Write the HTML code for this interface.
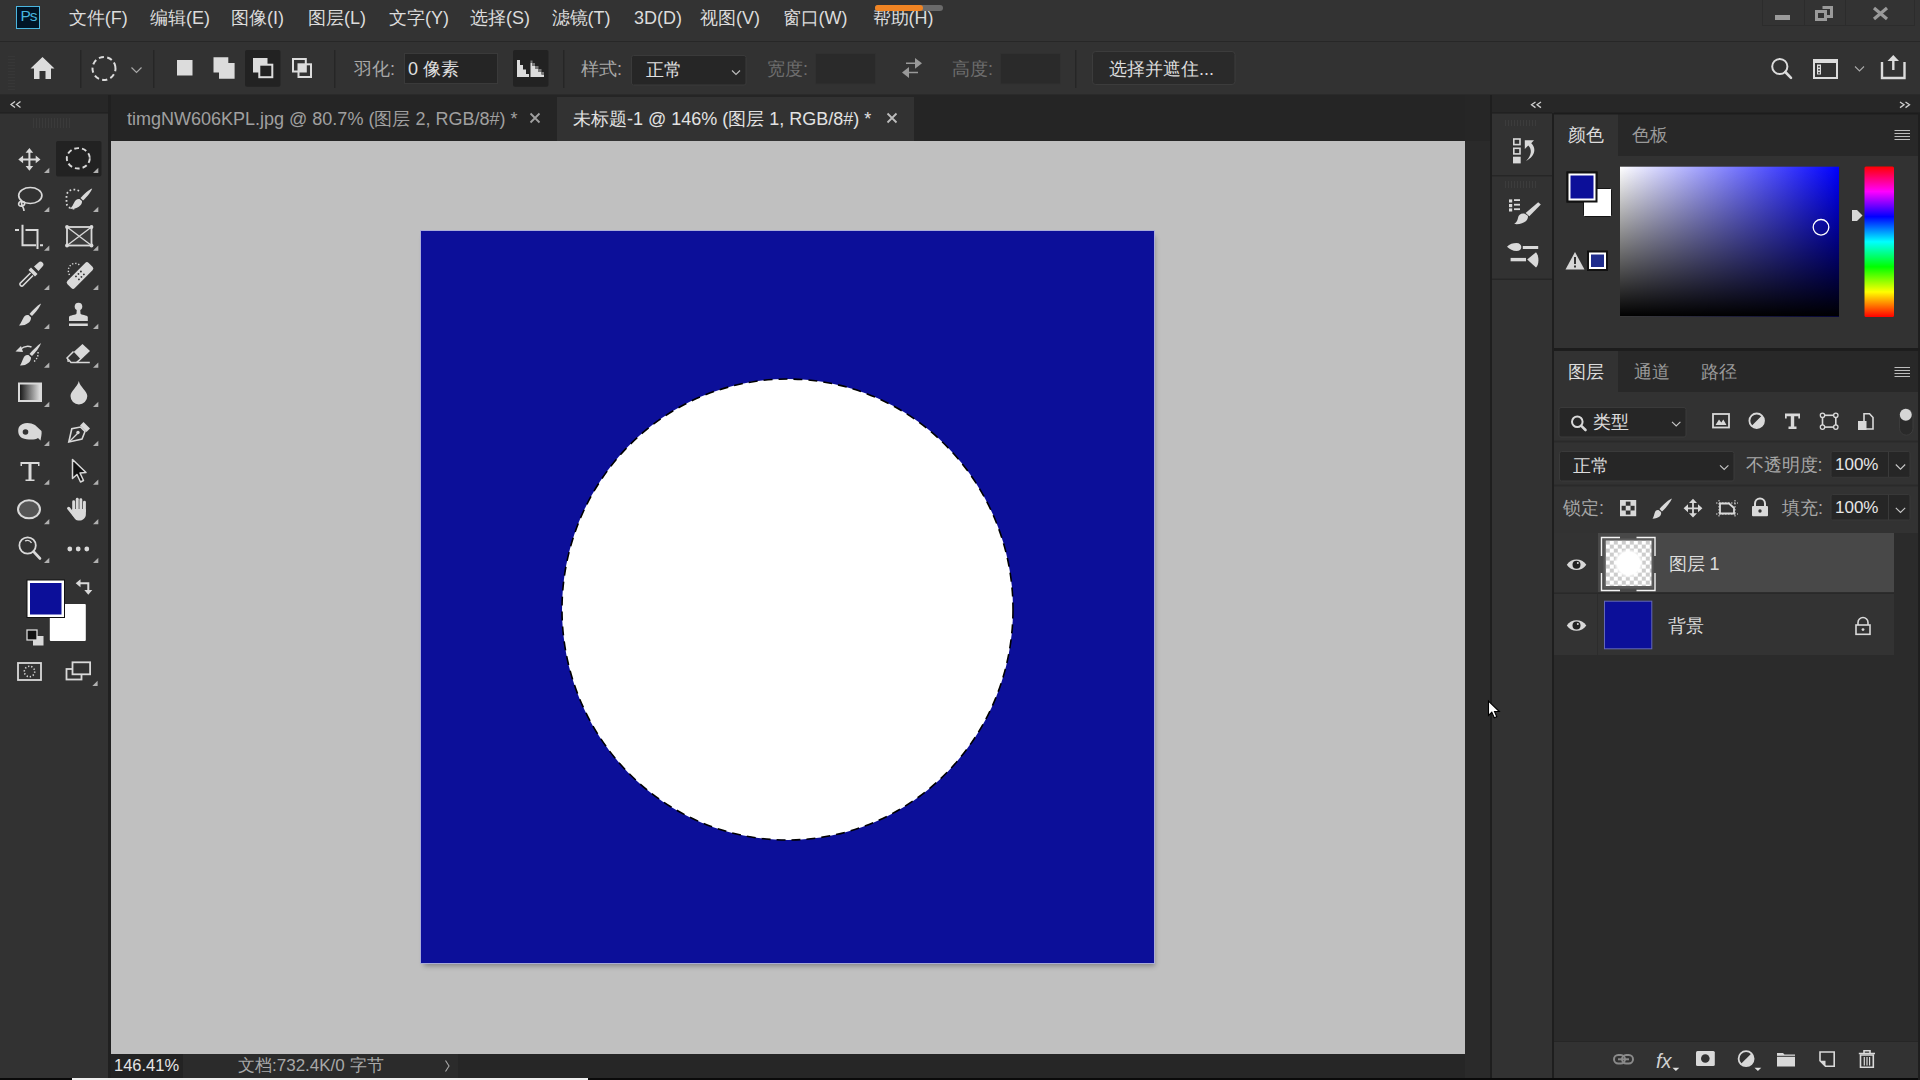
<!DOCTYPE html>
<html><head><meta charset="utf-8">
<style>
*{margin:0;padding:0;box-sizing:border-box}
html,body{width:1920px;height:1080px;overflow:hidden;background:#323232;font-family:"Liberation Sans",sans-serif;color:#d6d6d6}
.a{position:absolute}
.t{position:absolute;white-space:nowrap;line-height:1}
svg{position:absolute;overflow:visible}
</style></head><body>
<!-- menu bar -->
<div class="a" style="left:0;top:0;width:1920px;height:41px;background:#333333"></div>
<div class="a" style="left:0;top:41px;width:1920px;height:1px;background:#272727"></div>
<!-- options bar -->
<div class="a" style="left:0;top:42px;width:1920px;height:53px;background:#323232"></div>
<div class="a" style="left:0;top:94px;width:1920px;height:1px;background:#2a2a2a"></div>
<!-- left tools panel -->
<div class="a" style="left:0;top:95px;width:108px;height:985px;background:#323232"></div>
<div class="a" style="left:0;top:95px;width:108px;height:18px;background:#272727"></div>
<div class="a" style="left:108px;top:95px;width:3px;height:985px;background:#202020"></div>
<!-- tab bar -->
<div class="a" style="left:111px;top:95px;width:1354px;height:46px;background:#252525"></div>
<div class="a" style="left:557px;top:97px;width:357px;height:44px;background:#323232"></div>
<!-- canvas area -->
<div class="a" style="left:111px;top:141px;width:1354px;height:913px;background:#c0c0c0"></div>
<!-- status bar -->
<div class="a" style="left:111px;top:1054px;width:1354px;height:24px;background:#262626"></div>
<div class="a" style="left:183px;top:1054px;width:275px;height:24px;background:#2b2b2b"></div>
<div class="a" style="left:1465px;top:1054px;width:25px;height:24px;background:#2f2f2f"></div>
<div class="a" style="left:111px;top:1054px;width:72px;height:24px;background:#232323"></div>
<!-- right dark column -->
<div class="a" style="left:1465px;top:95px;width:25px;height:985px;background:#2a2a2a"></div>
<div class="a" style="left:1465px;top:95px;width:25px;height:46px;background:#262626"></div>
<div class="a" style="left:1490px;top:95px;width:2px;height:985px;background:#1e1e1e"></div>
<!-- icon column -->
<div class="a" style="left:1492px;top:95px;width:60px;height:985px;background:#323232"></div>
<div class="a" style="left:1492px;top:95px;width:60px;height:18px;background:#272727"></div>
<div class="a" style="left:1552px;top:113px;width:2px;height:967px;background:#1e1e1e"></div>
<div class="a" style="left:1552px;top:95px;width:2px;height:18px;background:#272727"></div>
<!-- right panels -->
<div class="a" style="left:1554px;top:95px;width:366px;height:18px;background:#272727"></div>
<!-- color panel -->
<div class="a" style="left:1554px;top:113px;width:366px;height:43px;background:#282828"></div>
<div class="a" style="left:1554px;top:113px;width:64px;height:43px;background:#323232"></div>
<div class="a" style="left:1554px;top:156px;width:366px;height:192px;background:#323232"></div>
<div class="a" style="left:1554px;top:348px;width:366px;height:3px;background:#1e1e1e"></div>
<!-- layers panel -->
<div class="a" style="left:1554px;top:351px;width:366px;height:41px;background:#282828"></div>
<div class="a" style="left:1554px;top:351px;width:64px;height:41px;background:#323232"></div>
<div class="a" style="left:1554px;top:392px;width:364px;height:141px;background:#323232"></div>
<div class="a" style="left:1554px;top:533px;width:366px;height:508px;background:#2b2b2b"></div>
<div class="a" style="left:1554px;top:533px;width:340px;height:122px;background:#333333"></div>
<div class="a" style="left:1598px;top:533px;width:296px;height:59px;background:#484848"></div>
<div class="a" style="left:1554px;top:1041px;width:366px;height:37px;background:#323232"></div>
<!-- bottom strip -->
<div class="a" style="left:0;top:1078px;width:1920px;height:2px;background:#0a0a0a"></div>
<div class="a" style="left:72px;top:1078px;width:516px;height:2px;background:#f0f0f0"></div>

<!-- MENU -->
<div class="a" style="left:16px;top:6px;width:24px;height:23px;background:#001426;border:1.4px solid #4ab6e0"></div>
<div class="t" style="left:20.5px;top:7.5px;font-size:15.5px;letter-spacing:-1.2px;color:#47b4de">Ps</div>
<div class="t" style="left:68.75px;top:9px;font-size:18px;color:#dcdcdc">文件(F)</div>
<div class="t" style="left:150px;top:9px;font-size:18px;color:#dcdcdc">编辑(E)</div>
<div class="t" style="left:231px;top:9px;font-size:18px;color:#dcdcdc">图像(I)</div>
<div class="t" style="left:308px;top:9px;font-size:18px;color:#dcdcdc">图层(L)</div>
<div class="t" style="left:389px;top:9px;font-size:18px;color:#dcdcdc">文字(Y)</div>
<div class="t" style="left:470px;top:9px;font-size:18px;color:#dcdcdc">选择(S)</div>
<div class="t" style="left:551.5px;top:9px;font-size:18px;color:#dcdcdc">滤镜(T)</div>
<div class="t" style="left:634px;top:9px;font-size:18px;color:#dcdcdc">3D(D)</div>
<div class="t" style="left:700px;top:9px;font-size:18px;color:#dcdcdc">视图(V)</div>
<div class="t" style="left:782.5px;top:9px;font-size:18px;color:#dcdcdc">窗口(W)</div>
<div class="t" style="left:872.5px;top:9px;font-size:18px;color:#dcdcdc">帮助(H)</div>
<div class="a" style="left:875px;top:5px;width:68px;height:6px;border-radius:3px;background:#6a6a6a"></div>
<div class="a" style="left:875px;top:5px;width:48px;height:6px;border-radius:3px;background:#f08423"></div>
<div class="a" style="left:1762px;top:0;width:153px;height:26px;border:1px solid #2c2c2c;border-top:none"></div>
<div class="a" style="left:1804px;top:0;width:1px;height:26px;background:#2c2c2c"></div>
<div class="a" style="left:1845px;top:0;width:1px;height:26px;background:#2c2c2c"></div>
<div class="a" style="left:1775px;top:15px;width:15px;height:5px;background:#9a9a9a"></div>
<svg style="left:0;top:0" width="1" height="1"><path d="M1822.5 7.5h9v9h-5M1816.5 11.5h9v8h-9z" fill="none" stroke="#9a9a9a" stroke-width="3"/><path d="M1874 8l13 11M1887 8l-13 11" stroke="#9a9a9a" stroke-width="3.2"/></svg>
<!-- OPTIONS -->
<svg style="left:0;top:0" width="1" height="1">
<rect opacity="0.55" x="8" y="56" width="7" height="1" fill="#3c3c3c"/>
<rect opacity="0.55" x="8" y="59" width="7" height="1" fill="#3c3c3c"/>
<rect opacity="0.55" x="8" y="62" width="7" height="1" fill="#3c3c3c"/>
<rect opacity="0.55" x="8" y="65" width="7" height="1" fill="#3c3c3c"/>
<rect opacity="0.55" x="8" y="68" width="7" height="1" fill="#3c3c3c"/>
<rect opacity="0.55" x="8" y="71" width="7" height="1" fill="#3c3c3c"/>
<rect opacity="0.55" x="8" y="74" width="7" height="1" fill="#3c3c3c"/>
<rect opacity="0.55" x="8" y="77" width="7" height="1" fill="#3c3c3c"/>
<rect opacity="0.55" x="8" y="80" width="7" height="1" fill="#3c3c3c"/>
<rect opacity="0.55" x="8" y="83" width="7" height="1" fill="#3c3c3c"/>
<rect opacity="0.55" x="8" y="86" width="7" height="1" fill="#3c3c3c"/>
<rect opacity="0.55" x="8" y="89" width="7" height="1" fill="#3c3c3c"/>
<rect x="80" y="50" width="1.5" height="38" fill="#262626"/>
<rect x="153" y="50" width="1.5" height="38" fill="#262626"/>
<rect x="334" y="50" width="1.5" height="38" fill="#262626"/>
<rect x="563" y="50" width="1.5" height="38" fill="#262626"/>
<rect x="1075" y="50" width="1.5" height="38" fill="#262626"/>
<path d="M42.5 57 L54.5 68.5 L51 68.5 L51 79 L45.5 79 L45.5 71 L39.5 71 L39.5 79 L34 79 L34 68.5 L30.5 68.5 Z" fill="#dcdcdc"/>
<circle cx="104" cy="68.5" r="11.5" fill="none" stroke="#dcdcdc" stroke-width="2" stroke-dasharray="5.2 3.3" transform="rotate(-12 104 68.5)"/>
<path d="M131.5 67.5 L136.5 72.5 L141.5 67.5" fill="none" stroke="#a8a8a8" stroke-width="1.2"/>
<rect x="177" y="60" width="15.5" height="15.5" fill="#dcdcdc"/>
<path d="M213.5 57.3 H228.3 V63 H234.6 V78.7 H219 V72.5 H213.5 Z" fill="#dcdcdc"/>
<rect x="245" y="50" width="35.5" height="36.7" rx="2" fill="#222222"/>
<rect x="253" y="58" width="14.5" height="14.5" fill="#dcdcdc"/>
<rect x="259.3" y="64.7" width="13" height="12.5" fill="#222" stroke="#dcdcdc" stroke-width="2"/>
<rect x="293" y="59" width="12.8" height="12.5" fill="none" stroke="#dcdcdc" stroke-width="2"/>
<rect x="298.5" y="64.3" width="12.5" height="12.7" fill="none" stroke="#dcdcdc" stroke-width="2"/>
<rect x="298.5" y="64.3" width="7.3" height="7.2" fill="#dcdcdc"/>
<rect x="404.5" y="53.5" width="93" height="30" fill="#252525" stroke="#3a3a3a" stroke-width="1"/>
<rect x="513" y="50" width="35.5" height="36.7" rx="2" fill="#222222"/>
<path d="M517 60 H520 V65 H523 V69.5 H526 V74 H529 V77 H517 Z" fill="#dcdcdc"/>
<path d="M530.5 63 H532.5 V66 H535.5 V69 H538.5 V72 H541.5 V74.5 H544 V77 H530.5 Z" fill="#dcdcdc"/>
<path d="M530.5 60.5 H532.5 V63 H530.5Z M532.5 63 H535 V66 H532.5Z M535.5 66 H538.5 V69 H535.5Z M538.5 69 H541.5 V72 H538.5Z M541.5 72 H544 V74.5 H541.5Z" fill="#777"/>
<rect x="631.5" y="55.5" width="114.5" height="29.5" rx="2" fill="#262626" stroke="#3a3a3a" stroke-width="1"/>
<path d="M732 70.5 L736 74.5 L740 70.5" fill="none" stroke="#bbb" stroke-width="1.2"/>
<rect x="815.5" y="53.5" width="60" height="30.5" fill="#2a2a2a" stroke="#303030" stroke-width="1"/>
<rect x="1000.5" y="53.5" width="60" height="30.5" fill="#2a2a2a" stroke="#303030" stroke-width="1"/>
<path d="M906 62.5 H915 V58 L922 63.3 L915 68.7 V64 H906Z M918 71.8 H909 V67 L902 72.5 L909 78 V73.3 H918Z" fill="#999"/>
<rect x="1092.5" y="51.5" width="142.5" height="33" rx="3" fill="#2a2a2a" stroke="#3c3c3c" stroke-width="1"/>
<circle cx="1779.8" cy="66.5" r="7.6" fill="none" stroke="#dcdcdc" stroke-width="2"/>
<path d="M1785.3 72 L1791 77.8" stroke="#dcdcdc" stroke-width="2.6" stroke-linecap="round"/>
<rect x="1814" y="60" width="23" height="18" fill="none" stroke="#dcdcdc" stroke-width="2"/>
<rect x="1814" y="60" width="23" height="3" fill="#dcdcdc"/>
<rect x="1817" y="64.5" width="4" height="10" fill="#dcdcdc"/><rect x="1818.2" y="66" width="1.6" height="1.6" fill="#323232"/><rect x="1818.2" y="69" width="1.6" height="1.6" fill="#323232"/><rect x="1818.2" y="72" width="1.6" height="1.6" fill="#323232"/>
<path d="M1855 66.5 L1859.5 71 L1864 66.5" fill="none" stroke="#aaa" stroke-width="1.1"/>
<path d="M1882 62 V78 H1904.5 V62 M1893.3 70 V59" fill="none" stroke="#dcdcdc" stroke-width="2.4"/>
<path d="M1887.5 61 L1893.3 55 L1899 61 Z" fill="#dcdcdc"/>
</svg>
<div class="t" style="left:354px;top:60px;font-size:18px;color:#a8a8a8">羽化:</div>
<div class="t" style="left:408px;top:60px;font-size:18px;color:#e0e0e0">0 像素</div>
<div class="t" style="left:581px;top:60px;font-size:18px;color:#a8a8a8">样式:</div>
<div class="t" style="left:646px;top:61px;font-size:18px;color:#e0e0e0">正常</div>
<div class="t" style="left:767px;top:60px;font-size:18px;color:#6e6e6e">宽度:</div>
<div class="t" style="left:952px;top:60px;font-size:18px;color:#6e6e6e">高度:</div>
<div class="t" style="left:1109px;top:60px;font-size:18px;color:#dcdcdc">选择并遮住...</div>
<!-- TOOLS -->
<svg style="left:0;top:0" width="1" height="1">
<defs><linearGradient id="gr" x1="0" x2="1"><stop offset="0" stop-color="#111"/><stop offset="1" stop-color="#e8e8e8"/></linearGradient></defs>
<path d="M15 101.5 L11 104.5 L15 107.5 M20.5 101.5 L16.5 104.5 L20.5 107.5" fill="none" stroke="#cfcfcf" stroke-width="1.3"/>
<rect x="33" y="118" width="1" height="10" fill="#3a3a3a"/>
<rect x="36" y="118" width="1" height="10" fill="#3a3a3a"/>
<rect x="39" y="118" width="1" height="10" fill="#3a3a3a"/>
<rect x="42" y="118" width="1" height="10" fill="#3a3a3a"/>
<rect x="45" y="118" width="1" height="10" fill="#3a3a3a"/>
<rect x="48" y="118" width="1" height="10" fill="#3a3a3a"/>
<rect x="51" y="118" width="1" height="10" fill="#3a3a3a"/>
<rect x="54" y="118" width="1" height="10" fill="#3a3a3a"/>
<rect x="57" y="118" width="1" height="10" fill="#3a3a3a"/>
<rect x="60" y="118" width="1" height="10" fill="#3a3a3a"/>
<rect x="63" y="118" width="1" height="10" fill="#3a3a3a"/>
<rect x="66" y="118" width="1" height="10" fill="#3a3a3a"/>
<rect x="69" y="118" width="1" height="10" fill="#3a3a3a"/>
<rect x="56" y="141" width="45.5" height="35.5" rx="2" fill="#222222"/>
<path d="M49.3 173 L49.3 167.7 L44.0 173Z" fill="#b0b0b0"/>
<path d="M98.3 173 L98.3 167.7 L93.0 173Z" fill="#b0b0b0"/>
<path d="M49.3 212 L49.3 206.7 L44.0 212Z" fill="#b0b0b0"/>
<path d="M98.3 212 L98.3 206.7 L93.0 212Z" fill="#b0b0b0"/>
<path d="M49.3 250.8 L49.3 245.5 L44.0 250.8Z" fill="#b0b0b0"/>
<path d="M98.3 250.8 L98.3 245.5 L93.0 250.8Z" fill="#b0b0b0"/>
<path d="M49.3 290 L49.3 284.7 L44.0 290Z" fill="#b0b0b0"/>
<path d="M98.3 290 L98.3 284.7 L93.0 290Z" fill="#b0b0b0"/>
<path d="M49.3 329 L49.3 323.7 L44.0 329Z" fill="#b0b0b0"/>
<path d="M98.3 329 L98.3 323.7 L93.0 329Z" fill="#b0b0b0"/>
<path d="M49.3 367.8 L49.3 362.5 L44.0 367.8Z" fill="#b0b0b0"/>
<path d="M98.3 367.8 L98.3 362.5 L93.0 367.8Z" fill="#b0b0b0"/>
<path d="M49.3 407 L49.3 401.7 L44.0 407Z" fill="#b0b0b0"/>
<path d="M98.3 407 L98.3 401.7 L93.0 407Z" fill="#b0b0b0"/>
<path d="M49.3 446 L49.3 440.7 L44.0 446Z" fill="#b0b0b0"/>
<path d="M98.3 446 L98.3 440.7 L93.0 446Z" fill="#b0b0b0"/>
<path d="M49.3 484.8 L49.3 479.5 L44.0 484.8Z" fill="#b0b0b0"/>
<path d="M98.3 484.8 L98.3 479.5 L93.0 484.8Z" fill="#b0b0b0"/>
<path d="M49.3 524.3 L49.3 519.0 L44.0 524.3Z" fill="#b0b0b0"/>
<path d="M98.3 524.3 L98.3 519.0 L93.0 524.3Z" fill="#b0b0b0"/>
<path d="M49.3 563 L49.3 557.7 L44.0 563Z" fill="#b0b0b0"/>
<path d="M98.3 563 L98.3 557.7 L93.0 563Z" fill="#b0b0b0"/>
<path d="M97.6 686 L97.6 680.7 L92.3 686Z" fill="#b0b0b0"/>
<path d="M29.4 151 V168 M21 159.4 H38" stroke="#d9d9d9" stroke-width="2"/>
<path d="M29.4 148 L25.6 152.8 H33.2Z M29.4 170.8 L25.6 166 H33.2Z M18.3 159.4 L23.1 155.6 V163.2Z M40.5 159.4 L35.7 155.6 V163.2Z" fill="#d9d9d9"/>
<ellipse cx="78.3" cy="158.3" rx="11.5" ry="10.2" fill="none" stroke="#d9d9d9" stroke-width="1.9" stroke-dasharray="4.8 3"/>
<ellipse cx="30.3" cy="195.5" rx="11.6" ry="8" fill="none" stroke="#d9d9d9" stroke-width="1.7"/>
<path d="M22 201 C17 202 18 207 22 206 C26 205 25 201 22 202 C20 204 24 207 24 211" fill="none" stroke="#d9d9d9" stroke-width="1.6"/>
<path d="M79 191 C75 188.5 67 189 66.5 196 V203 C67 208 72 209 76 208.5" fill="none" stroke="#d9d9d9" stroke-width="1.8" stroke-dasharray="1.7 2.3"/>
<path d="M92.2 188.5 C91 192 86 198 83 200.5 L80.5 198 C83.5 194.5 89 189.5 92.2 188.5Z" fill="#d9d9d9"/><path d="M79.5 199 C74 198.5 74.5 204.5 70 209 C77 209 82.5 205.5 82 201Z" fill="#d9d9d9"/>
<path d="M15 230 H19 M22.5 224.7 V245.3 H36 M25.5 230 H37.5 V249 M40 245.3 H43" fill="none" stroke="#d9d9d9" stroke-width="2"/>
<rect x="67" y="227" width="24.5" height="18.5" fill="#3c3c3c"/>
<rect x="67" y="227" width="24.5" height="18.5" fill="none" stroke="#d9d9d9" stroke-width="1.8"/><path d="M67 227 L91.5 245.5 M91.5 227 L67 245.5" stroke="#d9d9d9" stroke-width="1.4"/>
<circle cx="67" cy="227" r="1.9" fill="#d9d9d9"/><circle cx="91.5" cy="227" r="1.9" fill="#d9d9d9"/><circle cx="67" cy="245.5" r="1.9" fill="#d9d9d9"/><circle cx="91.5" cy="245.5" r="1.9" fill="#d9d9d9"/>
<path d="M34 266.5 L38.5 262.5 A2.6 2.6 0 0 1 42.5 266.5 L38.5 271Z" fill="#d9d9d9"/><path d="M31 267.5 L37.5 274 L35 276.5 L28.5 270Z" fill="#d9d9d9"/>
<path d="M30.5 273 L20 283.5 A2 2 0 0 0 22.5 286 L33 275.5" fill="none" stroke="#d9d9d9" stroke-width="1.6"/>
<g transform="rotate(-45 80 275.5)"><rect x="65" y="270.3" width="30" height="10.4" rx="2.5" fill="#d9d9d9"/><circle cx="76.5" cy="273.3" r="0.95" fill="#323232"/><circle cx="76.5" cy="277.5" r="0.95" fill="#323232"/><circle cx="80.0" cy="273.3" r="0.95" fill="#323232"/><circle cx="80.0" cy="277.5" r="0.95" fill="#323232"/><circle cx="83.5" cy="273.3" r="0.95" fill="#323232"/><circle cx="83.5" cy="277.5" r="0.95" fill="#323232"/></g>
<path d="M69.5 275 C67 270 68.5 265 74 263.5 C76 263 78 264 79.5 265" fill="none" stroke="#d9d9d9" stroke-width="1.4" stroke-dasharray="1.3 1.8"/>
<path d="M41 303.5 C40 307 35 313 32 316 L29.5 314 C32.5 310.5 38 305 41 303.5Z" fill="#d9d9d9"/>
<path d="M28.5 315 C23 314 23.5 320 19 325.5 C26 326 31.5 322 31 317.5Z" fill="#d9d9d9"/>
<circle cx="78.5" cy="306.5" r="3.8" fill="#d9d9d9"/><path d="M76.8 309 H80.2 L80.5 313.5 C80.5 315 87.5 315 87.8 317 V321 H69 V317 C69.5 315 76.5 315 76.5 313.5Z" fill="#d9d9d9"/><rect x="69" y="323.5" width="18.8" height="2.5" fill="#d9d9d9"/>
<path d="M41 343 C40 347 35 353 32 356 L29.5 354 C32.5 350.5 38 345 41 343Z" fill="#d9d9d9"/>
<path d="M28.5 355 C23 354 23.5 360 20 365.5 C26 366 31.5 362 31 357.5Z" fill="#d9d9d9"/>
<path d="M15.5 351.5 L21 346 L23 352Z" fill="#d9d9d9"/><path d="M20 349.5 C24 346 28 345.5 31.5 347" fill="none" stroke="#d9d9d9" stroke-width="1.5"/>
<path d="M38 352 C38.5 356 37 359 33.5 362" fill="none" stroke="#d9d9d9" stroke-width="1.4" stroke-dasharray="1.3 1.8"/>
<path d="M82.5 344 L90 351 L78.5 362 L67.5 362 L67 358 Z" fill="#d9d9d9"/><path d="M67.5 357.5 L73.5 351.5 L80 358.5 L76 362 H69Z" fill="#323232"/><path d="M73.5 351.5 L67 358 L71 362.5 H89.8" fill="none" stroke="#d9d9d9" stroke-width="1.5"/>
<rect x="19" y="383.5" width="22" height="17.5" fill="url(#gr)" stroke="#d9d9d9" stroke-width="2"/>
<path d="M78.8 381 C80 387 87.3 391 87.3 396 A8.4 8.4 0 0 1 70.5 396 C70.5 391 77.5 387 78.8 381Z" fill="#d9d9d9"/>
<path d="M19 427 C22 422 30 422 35 425 L41.5 431 C42 434 41 437 40.5 440.5 L38 438 C35 440 28 440 22 438 C18 436 17.5 430 19 427Z" fill="#d9d9d9"/><circle cx="25.5" cy="432" r="2.8" fill="#323232"/>
<path d="M83.5 422 L90 428.5 L86.5 432 L80 425.5Z" fill="#d9d9d9"/>
<path d="M80.5 427 L85 431.5 L82 439 L68.8 442 L71.8 428.8Z" fill="none" stroke="#d9d9d9" stroke-width="1.6"/><path d="M69.5 441.5 L77.5 433.5" stroke="#d9d9d9" stroke-width="1.2"/><circle cx="78" cy="432.5" r="1.7" fill="#d9d9d9"/>
<path d="M20.5 462 H39.5 V466 H38 V464 H31.5 V479.5 H34.5 V481 H25.5 V479.5 H28.5 V464 H22 V466 H20.5Z" fill="#d9d9d9"/>
<path d="M72.5 459.5 L86 472.5 L80 473 L83.5 480.5 L80.5 482 L77 474.5 L72.5 478.5Z" fill="#111" stroke="#d9d9d9" stroke-width="1.5" stroke-linejoin="round"/>
<ellipse cx="29" cy="509.3" rx="11" ry="9" fill="#555" stroke="#d9d9d9" stroke-width="2"/>
<rect x="72.2" y="500.3" width="2.9" height="12" rx="1.45" fill="#d9d9d9"/><rect x="75.8" y="497.8" width="2.9" height="14" rx="1.45" fill="#d9d9d9"/><rect x="79.4" y="498.3" width="2.9" height="14" rx="1.45" fill="#d9d9d9"/><rect x="83" y="500.8" width="2.9" height="12" rx="1.45" fill="#d9d9d9"/><path d="M72.2 509 H85.9 V514 C85.9 518 83 520.6 79 520.6 C76 520.6 74.5 519 72.5 515Z" fill="#d9d9d9"/><path d="M68.6 508.3 L74 515" stroke="#d9d9d9" stroke-width="3" stroke-linecap="round"/>
<circle cx="27.6" cy="545.5" r="8.2" fill="none" stroke="#d9d9d9" stroke-width="1.8"/><path d="M33.5 551.5 L40 558.5" stroke="#d9d9d9" stroke-width="2.6" stroke-linecap="round"/><path d="M25 541 A5 5 0 0 1 31.5 543" fill="none" stroke="#d9d9d9" stroke-width="1.3"/>
<circle cx="69.8" cy="549" r="2.4" fill="#d9d9d9"/>
<circle cx="78.2" cy="549" r="2.4" fill="#d9d9d9"/>
<circle cx="86.8" cy="549" r="2.4" fill="#d9d9d9"/>
<rect x="49.8" y="604" width="36" height="37" rx="1" fill="#fff"/>
<rect x="27" y="580" width="37.5" height="37.5" fill="#fff" stroke="#111" stroke-width="1"/>
<rect x="30" y="583" width="31.5" height="31.5" fill="#0c0f99"/>
<path d="M75.7 583.3 L80.5 579.3 V587.3Z M88.3 594.8 L84.3 590 H92.3Z" fill="#d9d9d9"/><path d="M80 583.3 H88.3 V590.5" fill="none" stroke="#d9d9d9" stroke-width="2"/>
<rect x="33" y="636" width="10.5" height="9.5" fill="#d9d9d9"/><rect x="27" y="630" width="10" height="10" fill="#111" stroke="#d9d9d9" stroke-width="1.3"/>
<rect x="18" y="663" width="23" height="17" fill="none" stroke="#d9d9d9" stroke-width="1.8"/><circle cx="29.5" cy="671.5" r="5.2" fill="none" stroke="#d9d9d9" stroke-width="1.5" stroke-dasharray="1.3 1.9"/>
<rect x="66.5" y="669" width="15" height="10.5" fill="none" stroke="#d9d9d9" stroke-width="1.8"/><rect x="72.5" y="662.3" width="17.6" height="12" fill="#323232" stroke="#d9d9d9" stroke-width="1.8"/>
</svg>
<!-- TABS -->
<div class="t" style="left:127px;top:110px;font-size:18px;color:#a0a0a0">timgNW606KPL.jpg @ 80.7% (图层 2, RGB/8#) *</div>
<div class="t" style="left:573px;top:110px;font-size:18px;color:#e2e2e2">未标题-1 @ 146% (图层 1, RGB/8#) *</div>
<svg style="left:0;top:0" width="1" height="1"><path d="M530.5 113.5 L539.5 122.5 M539.5 113.5 L530.5 122.5" stroke="#a0a0a0" stroke-width="1.8"/><path d="M887.5 113.5 L896.5 122.5 M896.5 113.5 L887.5 122.5" stroke="#bdbdbd" stroke-width="1.8"/></svg>
<div class="t" style="left:114px;top:1057px;font-size:16.5px;color:#e6e6e6">146.41%</div>
<div class="t" style="left:238px;top:1057px;font-size:17px;color:#a8a8a8">文档:732.4K/0 字节</div>
<svg style="left:0;top:0" width="1" height="1"><path d="M445.5 1060.5 L449 1066 L445.5 1071.5" fill="none" stroke="#a8a8a8" stroke-width="1.1"/></svg>
<!-- RIGHT -->
<svg style="left:0;top:0" width="1" height="1">
<defs>
<linearGradient id="sat" x1="0" x2="1" y1="0" y2="0"><stop offset="0" stop-color="#fff"/><stop offset="1" stop-color="#0000ff"/></linearGradient>
<linearGradient id="val" x1="0" x2="0" y1="0" y2="1"><stop offset="0" stop-color="#000" stop-opacity="0"/><stop offset="1" stop-color="#000" stop-opacity="1"/></linearGradient>
<linearGradient id="hue" x1="0" x2="0" y1="0" y2="1"><stop offset="0" stop-color="#ff0000"/><stop offset="0.1667" stop-color="#ff00ff"/><stop offset="0.3333" stop-color="#0000ff"/><stop offset="0.5" stop-color="#00ffff"/><stop offset="0.6667" stop-color="#00ff00"/><stop offset="0.8333" stop-color="#ffff00"/><stop offset="1" stop-color="#ff0000"/></linearGradient>
<pattern id="chk" width="8" height="8" patternUnits="userSpaceOnUse" x="1605.8" y="540.6"><rect width="8" height="8" fill="#fff"/><rect width="4" height="4" fill="#cccccc"/><rect x="4" y="4" width="4" height="4" fill="#cccccc"/></pattern>
<radialGradient id="blob"><stop offset="0" stop-color="#fff"/><stop offset="0.75" stop-color="#fff"/><stop offset="1" stop-color="#fff" stop-opacity="0"/></radialGradient>
</defs>
<rect x="1554" y="112.5" width="366" height="2" fill="#1c1c1c"/>
<rect x="1492" y="112.5" width="60" height="1" fill="#1c1c1c"/>
<rect x="0" y="112.5" width="108" height="1" fill="#1f1f1f"/>
<path d="M1535.5 102 L1531.5 104.8 L1535.5 107.6 M1541 102 L1537 104.8 L1541 107.6" fill="none" stroke="#cfcfcf" stroke-width="1.3"/>
<path d="M1900 102 L1904 104.8 L1900 107.6 M1905.5 102 L1909.5 104.8 L1905.5 107.6" fill="none" stroke="#cfcfcf" stroke-width="1.3"/>
<rect x="1918" y="113" width="2" height="967" fill="#1e1e1e"/>
<rect x="1505" y="120" width="1" height="6" fill="#3c3c3c"/><rect x="1505" y="181" width="1" height="7" fill="#3c3c3c"/>
<rect x="1508" y="120" width="1" height="6" fill="#3c3c3c"/><rect x="1508" y="181" width="1" height="7" fill="#3c3c3c"/>
<rect x="1511" y="120" width="1" height="6" fill="#3c3c3c"/><rect x="1511" y="181" width="1" height="7" fill="#3c3c3c"/>
<rect x="1514" y="120" width="1" height="6" fill="#3c3c3c"/><rect x="1514" y="181" width="1" height="7" fill="#3c3c3c"/>
<rect x="1517" y="120" width="1" height="6" fill="#3c3c3c"/><rect x="1517" y="181" width="1" height="7" fill="#3c3c3c"/>
<rect x="1520" y="120" width="1" height="6" fill="#3c3c3c"/><rect x="1520" y="181" width="1" height="7" fill="#3c3c3c"/>
<rect x="1523" y="120" width="1" height="6" fill="#3c3c3c"/><rect x="1523" y="181" width="1" height="7" fill="#3c3c3c"/>
<rect x="1526" y="120" width="1" height="6" fill="#3c3c3c"/><rect x="1526" y="181" width="1" height="7" fill="#3c3c3c"/>
<rect x="1529" y="120" width="1" height="6" fill="#3c3c3c"/><rect x="1529" y="181" width="1" height="7" fill="#3c3c3c"/>
<rect x="1532" y="120" width="1" height="6" fill="#3c3c3c"/><rect x="1532" y="181" width="1" height="7" fill="#3c3c3c"/>
<rect x="1535" y="120" width="1" height="6" fill="#3c3c3c"/><rect x="1535" y="181" width="1" height="7" fill="#3c3c3c"/>
<rect x="1492" y="175" width="60" height="1.5" fill="#262626"/><rect x="1492" y="278.5" width="60" height="1.5" fill="#262626"/>
<rect x="1513.8" y="139" width="6.2" height="5.6" fill="none" stroke="#d9d9d9" stroke-width="1.6"/><rect x="1513.8" y="148.3" width="6.2" height="5.6" fill="none" stroke="#d9d9d9" stroke-width="1.6"/><rect x="1513" y="156.7" width="7.7" height="6.7" fill="#d9d9d9"/>
<path d="M1524.8 140.2 L1534 140.2 L1531.2 143.3 C1535.8 147.5 1536.5 155.5 1526 161 C1531.8 155 1532.2 149.5 1528.3 145.4 L1524.8 149Z" fill="#d9d9d9"/>
<rect x="1509" y="199.4" width="3.2" height="3.1" fill="#d9d9d9"/><rect x="1509" y="204" width="3.2" height="3.2" fill="#d9d9d9"/><rect x="1509" y="208.4" width="3.2" height="3.1" fill="#d9d9d9"/><rect x="1514" y="199.2" width="6" height="1.8" fill="#d9d9d9"/><rect x="1514" y="203.8" width="6" height="1.8" fill="#d9d9d9"/><rect x="1514" y="208.3" width="6" height="1.8" fill="#d9d9d9"/><path d="M1538.2 202.3 L1540.8 204.6 L1529.3 216.3 L1525.6 212.9Z" fill="#d9d9d9"/><path d="M1524.8 213.8 C1521 213 1518.5 215 1518 218 C1517.5 221 1515.8 222.8 1514.2 224 C1519 224.5 1523.5 223.5 1526 221 C1528 219 1528.2 216.5 1527.8 215.8Z" fill="#d9d9d9"/><path d="M1507 246.8 C1509.5 243.8 1513 243 1516.5 243 C1519.5 243 1521.3 245 1521.3 247 C1521.3 249.5 1519.5 251 1516.5 251 C1512.5 251 1510 249.5 1507 246.8Z" fill="#d9d9d9"/><rect x="1522.8" y="246" width="15.4" height="3" fill="#d9d9d9"/><rect x="1510.6" y="257.9" width="15.4" height="3.4" fill="#d9d9d9"/><path d="M1527.2 259.6 L1536 252.2 C1539 255.5 1539.5 264 1536 267.6Z" fill="#d9d9d9"/>
<path d="M1894.5 130.5 H1910 M1894.5 133.5 H1910 M1894.5 136.5 H1910 M1894.5 139.5 H1910" stroke="#bdbdbd" stroke-width="1"/>
<rect x="1566.5" y="171.5" width="31" height="31" fill="#111"/><rect x="1583.5" y="188.5" width="28" height="28" rx="1" fill="#fff" stroke="#151515" stroke-width="1"/>
<rect x="1566.5" y="171.5" width="31" height="31" fill="#111"/><rect x="1568.5" y="173.5" width="27" height="27" fill="#fff"/><rect x="1570.5" y="175.5" width="23" height="23" fill="#0c0f99"/>
<path d="M1575 252 L1584.5 269.5 H1565.5Z" fill="#d6d6d6"/><rect x="1574" y="257" width="2" height="7" fill="#323232"/><rect x="1574" y="265.5" width="2" height="2" fill="#323232"/>
<rect x="1587" y="250.5" width="21" height="20.5" fill="#111"/><rect x="1589" y="252.5" width="17" height="16.5" fill="#fff"/><rect x="1591" y="254.5" width="13" height="12.5" fill="#1f2c8c"/>
<rect x="1620" y="166.7" width="219" height="150" fill="url(#sat)"/><rect x="1620" y="166.7" width="219" height="150" fill="url(#val)"/>
<circle cx="1821" cy="227.3" r="7.8" fill="none" stroke="#fff" stroke-width="1.3"/>
<rect x="1864.5" y="166.5" width="29.5" height="150.5" rx="1.5" fill="url(#hue)"/>
<path d="M1852 210 H1857 L1862.5 215.5 L1857 221 H1852Z" fill="#d8d8d8"/>
<rect x="1554" y="348" width="366" height="2.5" fill="#1c1c1c"/>
<path d="M1894.5 367.5 H1910 M1894.5 370.5 H1910 M1894.5 373.5 H1910 M1894.5 376.5 H1910" stroke="#bdbdbd" stroke-width="1"/>
<rect x="1559" y="407.5" width="127" height="29.5" rx="2" fill="#262626" stroke="#3a3a3a" stroke-width="1"/>
<circle cx="1577.3" cy="421.8" r="5.3" fill="none" stroke="#d9d9d9" stroke-width="2"/><path d="M1581.3 425.8 L1585.5 430" stroke="#d9d9d9" stroke-width="2.6" stroke-linecap="round"/>
<path d="M1672 421.8 L1676.2 426 L1680.4 421.8" fill="none" stroke="#c8c8c8" stroke-width="1.1"/>
<rect x="1713" y="414" width="16" height="13.5" fill="none" stroke="#d9d9d9" stroke-width="1.8"/><path d="M1715.5 425 L1719 419.5 L1721.3 422.5 L1723.3 419.5 L1726.5 425Z" fill="#d9d9d9"/>
<circle cx="1756.7" cy="420.8" r="7.3" fill="none" stroke="#d9d9d9" stroke-width="1.8"/><path d="M1761.9 415.6 A7.3 7.3 0 0 1 1751.5 426 Z" fill="#d9d9d9"/>
<path d="M1785 413.5 H1800 V418.5 H1798.3 V416.3 H1794.2 V426.5 H1796.5 V429 H1788.5 V426.5 H1790.8 V416.3 H1786.7 V418.5 H1785Z" fill="#d9d9d9"/>
<rect x="1822.5" y="415.3" width="13.3" height="11.8" fill="none" stroke="#d9d9d9" stroke-width="1.6"/>
<circle cx="1822.5" cy="415.3" r="2.2" fill="#323232" stroke="#d9d9d9" stroke-width="1.3"/>
<circle cx="1835.8" cy="415.3" r="2.2" fill="#323232" stroke="#d9d9d9" stroke-width="1.3"/>
<circle cx="1822.5" cy="427.1" r="2.2" fill="#323232" stroke="#d9d9d9" stroke-width="1.3"/>
<circle cx="1835.8" cy="427.1" r="2.2" fill="#323232" stroke="#d9d9d9" stroke-width="1.3"/>
<path d="M1864 413.8 H1869.5 L1873 417.5 V429 H1864Z" fill="none" stroke="#d9d9d9" stroke-width="1.6"/><rect x="1858" y="421" width="8.5" height="9" fill="#d9d9d9"/>
<rect x="1899.5" y="408.6" width="13.5" height="26.6" rx="6.75" fill="#2a2a2a" stroke="#3c3c3c" stroke-width="1"/><circle cx="1905.8" cy="414.8" r="6" fill="#d6d6d6"/>
<rect x="1554" y="440.5" width="364" height="2" fill="#2a2a2a"/><rect x="1554" y="484.5" width="364" height="2" fill="#2a2a2a"/>
<rect x="1559.5" y="451.5" width="174.5" height="29.5" rx="2" fill="#262626" stroke="#3a3a3a" stroke-width="1"/>
<path d="M1720 465.3 L1724.2 469.5 L1728.4 465.3" fill="none" stroke="#c8c8c8" stroke-width="1.1"/>
<rect x="1831" y="451.5" width="79" height="25.8" rx="1.5" fill="#262626" stroke="#383838" stroke-width="1"/><rect x="1888" y="452" width="1" height="25" fill="#3a3a3a"/>
<path d="M1895.8 464.5 L1900.5 469.2 L1905.2 464.5" fill="none" stroke="#c8c8c8" stroke-width="1.1"/>
<rect x="1831" y="494.5" width="79" height="25.5" rx="1.5" fill="#262626" stroke="#383838" stroke-width="1"/><rect x="1888" y="495" width="1" height="25" fill="#3a3a3a"/>
<path d="M1895.8 507.8 L1900.5 512.5 L1905.2 507.8" fill="none" stroke="#c8c8c8" stroke-width="1.1"/>
<rect x="1620.8" y="500.8" width="14.6" height="14.6" fill="none" stroke="#d9d9d9" stroke-width="1.6"/>
<rect x="1621.00" y="501.00" width="4.8" height="4.8" fill="#d9d9d9"/>
<rect x="1621.00" y="510.46" width="4.8" height="4.8" fill="#d9d9d9"/>
<rect x="1625.73" y="505.73" width="4.8" height="4.8" fill="#d9d9d9"/>
<rect x="1630.46" y="501.00" width="4.8" height="4.8" fill="#d9d9d9"/>
<rect x="1630.46" y="510.46" width="4.8" height="4.8" fill="#d9d9d9"/>
<path d="M1672 498.5 C1670 503 1665 509 1662 511.5 L1659.5 509 C1662.5 505.5 1668 500 1672 498.5Z" fill="#d9d9d9"/><path d="M1658.5 510 C1654 509.5 1655 515 1652.5 518.8 C1659 518.5 1662 515 1661 512Z" fill="#d9d9d9"/>
<path d="M1693 500.5 V516 M1685.5 508.3 H1700.5" stroke="#d9d9d9" stroke-width="1.8"/><path d="M1693 498.7 L1689 503 H1697Z M1693 517.5 L1689 513.3 H1697Z M1683.6 508.3 L1688 504.3 V512.3Z M1702.4 508.3 L1698 504.3 V512.3Z" fill="#d9d9d9"/>
<path d="M1716 503 H1738 M1716 514 H1738 M1719 500 V517 M1735 500 V517" stroke="#d9d9d9" stroke-width="1" stroke-dasharray="1.5 1.5"/><path d="M1720 503.5 H1729 L1734 508 V513.5 H1720Z" fill="none" stroke="#d9d9d9" stroke-width="1.8"/>
<path d="M1755 506 V503.5 A5 5 0 0 1 1765 503.5 V506" fill="none" stroke="#d9d9d9" stroke-width="2"/><rect x="1752" y="506" width="16" height="10.3" rx="1" fill="#d9d9d9"/><circle cx="1760" cy="511" r="1.7" fill="#323232"/>
<rect x="1554" y="592.5" width="340" height="1.5" fill="#292929"/><rect x="1597" y="594" width="1" height="61" fill="#2c2c2c"/>
<path d="M1566.8 564.7 C1571 557.7 1582 557.7 1586.3 564.7 C1582 571.7 1571 571.7 1566.8 564.7Z" fill="#d8d8d8"/><circle cx="1576.5" cy="564.7" r="4" fill="#222"/><circle cx="1577.8" cy="563.1" r="1" fill="#d8d8d8"/>
<path d="M1566.8 625.5 C1571 618.5 1582 618.5 1586.3 625.5 C1582 632.5 1571 632.5 1566.8 625.5Z" fill="#d8d8d8"/><circle cx="1576.5" cy="625.5" r="4" fill="#222"/><circle cx="1577.8" cy="623.9" r="1" fill="#d8d8d8"/>
<rect x="1603.5" y="538.5" width="50" height="50" fill="#5a5a5a"/><rect x="1605.8" y="540.6" width="45.7" height="45.4" fill="url(#chk)"/><circle cx="1628.6" cy="563.3" r="15" fill="url(#blob)"/>
<path d="M1601.5 556 V537.5 H1620 M1636.5 537.5 H1655 V556 M1655 573 V590.5 H1636.5 M1620 590.5 H1601.5 V573" fill="none" stroke="#f4f4f4" stroke-width="1.4"/>
<rect x="1604.5" y="601.2" width="47.3" height="47.6" fill="#0c0f99" stroke="#6468b8" stroke-width="1"/>
<path d="M1858 625 V622.5 A5 5 0 0 1 1868 622.5 V625" fill="none" stroke="#d9d9d9" stroke-width="1.6"/><rect x="1856" y="625" width="14" height="9.3" fill="none" stroke="#d9d9d9" stroke-width="1.6"/><circle cx="1863" cy="629.6" r="1.4" fill="#d9d9d9"/>
<rect x="1554" y="1041" width="364" height="1" fill="#262626"/>
<rect x="1614" y="1055" width="11" height="8.5" rx="4.25" fill="none" stroke="#8a8a8a" stroke-width="2"/><rect x="1622" y="1055" width="11" height="8.5" rx="4.25" fill="none" stroke="#8a8a8a" stroke-width="2"/><rect x="1618" y="1058.3" width="11" height="2" fill="#8a8a8a"/>
<text x="1656" y="1067.5" font-family="Liberation Sans" font-style="italic" font-size="20" fill="#d0d0d0">fx</text><path d="M1672.5 1067.7 H1679.3 L1675.9 1071Z M1754.5 1067.7 H1761.3 L1757.9 1071Z" fill="#e0e0e0"/>
<rect x="1696" y="1051" width="18.8" height="15" rx="1.5" fill="#d9d9d9"/><circle cx="1705.3" cy="1058.5" r="4.3" fill="#323232"/>
<circle cx="1746.1" cy="1058.7" r="7.5" fill="none" stroke="#d9d9d9" stroke-width="1.8"/><path d="M1751.4 1053.4 A7.5 7.5 0 0 1 1740.8 1064 Z" fill="#d9d9d9"/>
<path d="M1777 1053 H1783 L1784.5 1054.5 H1795 V1066.5 H1777Z" fill="#d9d9d9"/><rect x="1777" y="1055.8" width="18" height="1" fill="#323232"/>
<path d="M1820 1052 H1834.2 V1066.2 H1825.5 L1820 1060.7Z" fill="none" stroke="#d9d9d9" stroke-width="1.6"/><path d="M1820 1060.7 H1825.5 V1066.2Z" fill="#d9d9d9"/>
<path d="M1858.8 1053.5 H1875 M1864 1053 V1050.8 H1870 V1053" fill="none" stroke="#d9d9d9" stroke-width="1.6"/><path d="M1860.5 1055 H1873.3 V1067.2 H1860.5Z" fill="none" stroke="#d9d9d9" stroke-width="1.6"/><path d="M1864.3 1057 V1065.5 M1867 1057 V1065.5 M1869.6 1057 V1065.5" stroke="#d9d9d9" stroke-width="1.2"/>
</svg>
<div class="t" style="left:1568px;top:126px;font-size:18px;color:#dcdcdc">颜色</div>
<div class="t" style="left:1632px;top:126px;font-size:18px;color:#9a9a9a">色板</div>
<div class="t" style="left:1568px;top:363px;font-size:18px;color:#dcdcdc">图层</div>
<div class="t" style="left:1634px;top:363px;font-size:18px;color:#9a9a9a">通道</div>
<div class="t" style="left:1701px;top:363px;font-size:18px;color:#9a9a9a">路径</div>
<div class="t" style="left:1592.5px;top:413px;font-size:18px;color:#dcdcdc">类型</div>
<div class="t" style="left:1572.5px;top:457px;font-size:18px;color:#dcdcdc">正常</div>
<div class="t" style="left:1745.5px;top:456px;font-size:18px;color:#a8a8a8">不透明度:</div>
<div class="t" style="left:1835px;top:456px;font-size:17px;color:#e6e6e6">100%</div>
<div class="t" style="left:1563px;top:499px;font-size:18px;color:#a8a8a8">锁定:</div>
<div class="t" style="left:1782px;top:499px;font-size:18px;color:#a8a8a8">填充:</div>
<div class="t" style="left:1835px;top:499px;font-size:17px;color:#e6e6e6">100%</div>
<div class="t" style="left:1668.5px;top:555px;font-size:18px;color:#dcdcdc">图层 1</div>
<div class="t" style="left:1668px;top:617px;font-size:18px;color:#dcdcdc">背景</div>
<!-- document -->
<div class="a" style="left:420px;top:230px;width:735px;height:734px;background:#a9acd8;box-shadow:2px 4px 5px -2px rgba(0,0,0,0.3)"></div>
<div class="a" style="left:421px;top:231px;width:733px;height:732px;background:#0c0f99"></div>
<svg style="left:0;top:0" width="1920" height="1080">
<ellipse cx="787.5" cy="609.5" rx="225.5" ry="230.5" fill="#ffffff" stroke="#000" stroke-width="1.6" stroke-dasharray="9 6"/>
</svg>
<svg style="left:0;top:0" width="1" height="1"><path d="M1488.5 701 V715.5 L1491.8 712.3 L1494.3 717.8 L1496.8 716.8 L1494.5 711.5 H1499.3Z" fill="#fff" stroke="#000" stroke-width="1.1" stroke-linejoin="miter"/></svg>
</body></html>
